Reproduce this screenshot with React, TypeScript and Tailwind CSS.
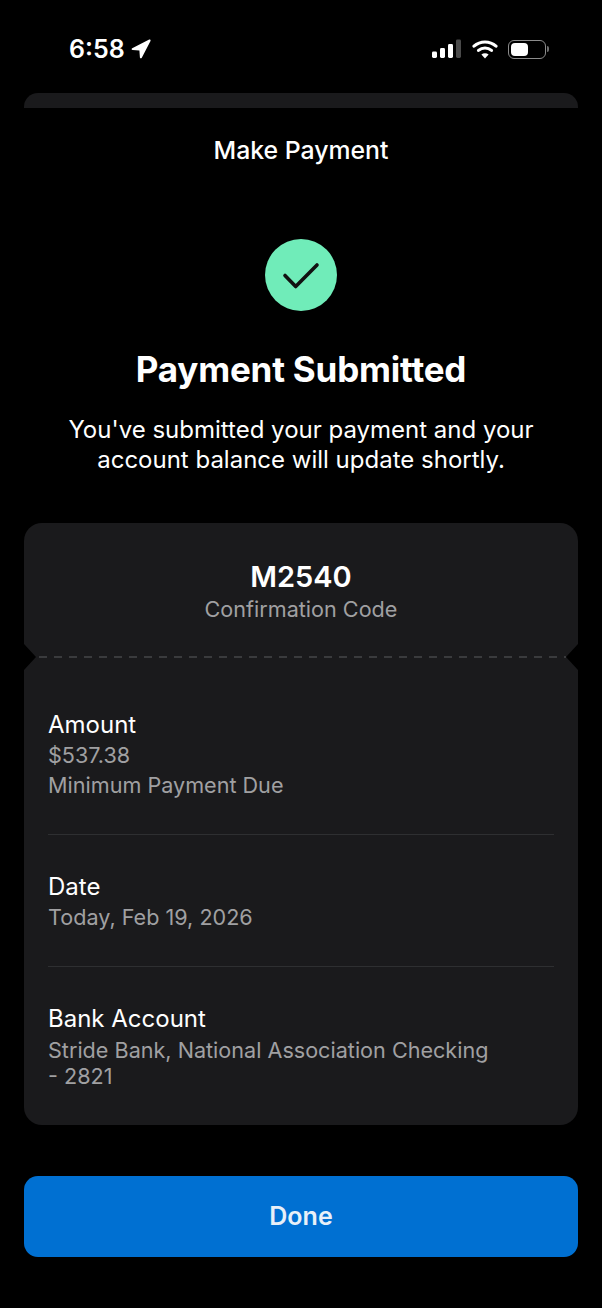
function LocationIcon() {
  return (
    <svg width="20" height="20" viewBox="0 0 20 20" className="block">
      <path
        d="M18.2 0.6L1.2 9.2C0.2 9.7 0.5 11 1.6 11L8.4 11.4L8.9 18.4C9 19.5 10.3 19.7 10.8 18.8L19.5 1.9C19.9 1 19.1 0.2 18.2 0.6Z"
        fill="#fff"
      />
    </svg>
  );
}

function SignalIcon() {
  return (
    <svg width="30" height="20" viewBox="0 0 30 20" className="block">
      <rect x="0" y="12.5" width="5" height="6.5" rx="1.4" fill="#fff" />
      <rect x="8" y="9" width="5" height="10" rx="1.4" fill="#fff" />
      <rect x="16" y="5" width="5" height="14" rx="1.4" fill="#fff" />
      <rect x="24" y="0.5" width="5" height="18.5" rx="1.4" fill="#4a4a4a" />
    </svg>
  );
}

function WifiIcon() {
  return (
    <svg width="26" height="20" viewBox="0 0 26 20" className="block">
      <path d="M2 7.2C8.2 1.6 17.8 1.6 24 7.2" fill="none" stroke="#fff" strokeWidth="3.1" strokeLinecap="round" />
      <path d="M6.5 11.4C10.2 8.2 15.8 8.2 19.5 11.4" fill="none" stroke="#fff" strokeWidth="3.1" strokeLinecap="round" />
      <path d="M13 19.4L9.4 15.4C11.4 13.7 14.6 13.7 16.6 15.4Z" fill="#fff" />
    </svg>
  );
}

function BatteryIcon() {
  return (
    <div className="flex items-center gap-[1px]">
      <div className="w-[38px] h-[19px] rounded-[6px] border-[1.5px] border-[#8c8c8c] p-[2px]">
        <div className="w-[17px] h-full rounded-[4px] bg-white" />
      </div>
      <div className="w-[2px] h-[6px] rounded-r-[2px] bg-[#6f6f6f]" />
    </div>
  );
}

function StatusBar() {
  return (
    <div className="h-[93px] pl-[69px] pr-[53px] pt-[33px] flex justify-between items-start">
      <div className="flex items-center gap-[6px] h-[32px]">
        <span className="text-[25px] leading-[32px] font-semibold text-white">6:58</span>
        <LocationIcon />
      </div>
      <div className="flex items-center gap-[10px] h-[32px]">
        <SignalIcon />
        <WifiIcon />
        <BatteryIcon />
      </div>
    </div>
  );
}

function Notch({ side }: { side: 'left' | 'right' }) {
  return (
    <svg
      width="13"
      height="26"
      viewBox="0 0 13 26"
      className={side === 'left' ? 'absolute left-0 top-[-13px]' : 'absolute right-0 top-[-13px]'}
    >
      <path d={side === 'left' ? 'M0 0L12 13L0 26Z' : 'M13 0L1 13L13 26Z'} fill="#000" />
    </svg>
  );
}

interface DetailRowProps {
  label: string;
  lines: string[];
  className: string;
}

function DetailRow({ label, lines, className }: DetailRowProps) {
  return (
    <div className={className}>
      <div className="text-[24px] leading-[30px] text-white">{label}</div>
      {lines.map((line, index) => (
        <div key={index} className="text-[21.6px] leading-[30px] text-[#a0a0a2]">
          {line}
        </div>
      ))}
    </div>
  );
}

export default function App() {
  return (
    <div className="w-[602px] h-[1308px] bg-black font-['Inter',sans-serif] overflow-hidden">
      <StatusBar />
      <div className="mx-6 h-[15px] rounded-t-[14px] bg-[#1a1a1c]" />

      <div className="pt-[26px] text-center text-[24.8px] leading-[32px] font-medium text-white">Make Payment</div>

      <div className="mt-[73px] mx-auto w-[72px] h-[72px] rounded-full bg-[#70ecb9] flex items-center justify-center">
        <svg width="40" height="40" viewBox="0 0 40 40">
          <path d="M4 20.5L14.7 31.5L36 10" fill="none" stroke="#111" strokeWidth="3.6" strokeLinecap="round" strokeLinejoin="round" />
        </svg>
      </div>

      <h1 className="mt-[37px] text-center text-[35px] leading-[42px] font-bold text-white tracking-[-0.2px]">Payment Submitted</h1>
      <p className="mt-[25px] text-center text-[24px] leading-[30px] text-white">
        You've submitted your payment and your
        <br />
        account balance will update shortly.
      </p>

      <div className="mt-[48px] mx-6 h-[602px] rounded-[18px] bg-[#1a1a1c]">
        <div className="h-[134px] pt-[37px] text-center">
          <div className="text-[29px] leading-[34px] font-semibold text-white">M2540</div>
          <div className="text-[21.6px] leading-[30px] text-[#a0a0a2]">Confirmation Code</div>
        </div>

        <div className="relative h-0">
          <Notch side="left" />
          <Notch side="right" />
          <div className="absolute left-[15px] right-[12px] top-[-1px] h-[2px] bg-[repeating-linear-gradient(90deg,#3a3b3d_0px,#3a3b3d_8px,transparent_8px,transparent_15px)]" />
        </div>

        <div className="mx-6">
          <DetailRow
            label="Amount"
            lines={['$537.38', 'Minimum Payment Due']}
            className="pt-[53px] h-[178px] border-b border-[#2e2f31]"
          />
          <DetailRow
            label="Date"
            lines={['Today, Feb 19, 2026']}
            className="pt-[37px] h-[132px] border-b border-[#2e2f31]"
          />
          <div className="pt-[37px]">
            <div className="text-[24px] leading-[30px] text-white">Bank Account</div>
            <div className="mt-[3px] text-[21.6px] leading-[26px] text-[#a0a0a2]">
              Stride Bank, National Association Checking
              <br />- 2821
            </div>
          </div>
        </div>
      </div>

      <button className="mt-[51px] mx-6 block w-[554px] h-[81px] rounded-[14px] bg-[#0070d2] text-[25px] font-semibold text-[#e8f0f8]">
        Done
      </button>
    </div>
  );
}
